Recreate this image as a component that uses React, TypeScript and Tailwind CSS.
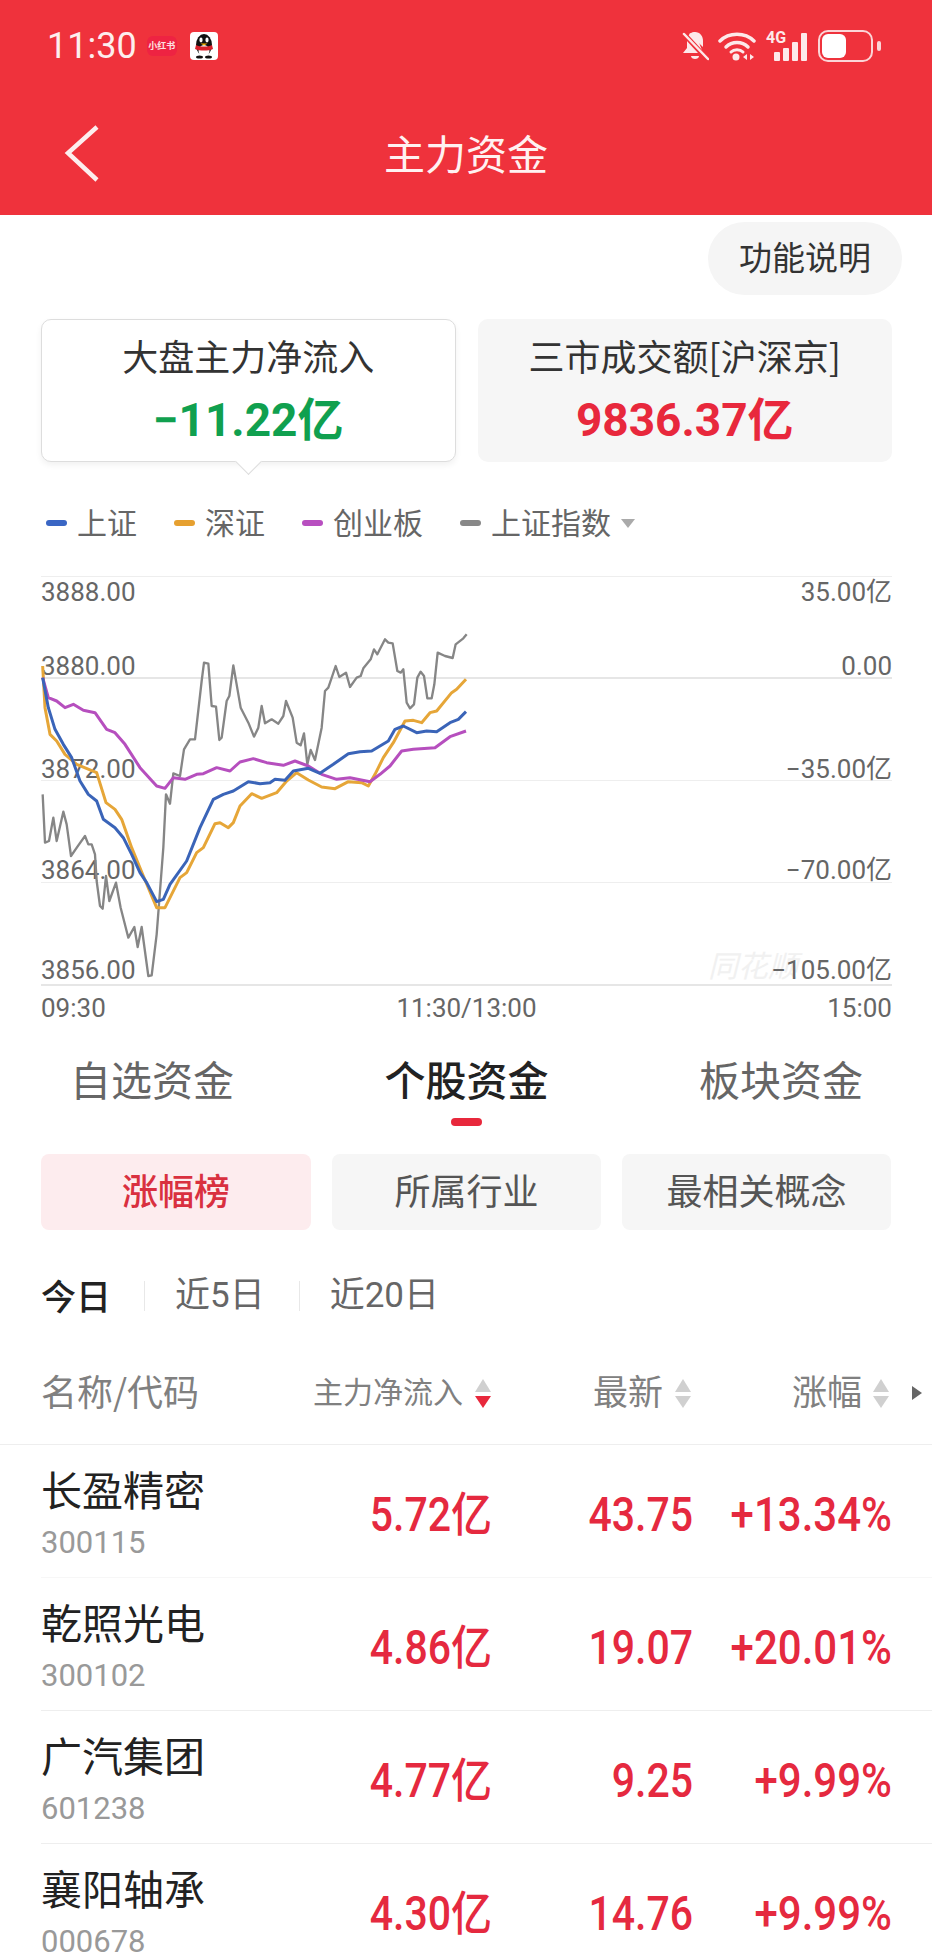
import React from 'react';

const grayLine = "128,700 135,845 147,840 160,770 170,840 190,752 200,790 213,885 235,853 255,825 265,850 275,850 285,880 290,960 300,1035 308,1043 318,945 328,1020 348,965 362,1040 385,1130 403,1098 413,1158 425,1098 445,1245 455,1243 470,1120 480,990 490,860 498,700 510,728 520,637 540,645 552,565 570,535 585,535 605,360 612,305 625,308 635,435 648,437 658,537 665,530 680,420 688,405 700,313 722,440 745,485 762,527 775,500 785,435 795,487 815,475 835,488 850,465 858,420 878,470 890,545 902,553 912,517 922,610 932,567 945,597 965,500 975,390 985,380 1007,315 1018,348 1038,335 1050,378 1070,350 1082,345 1090,322 1112,295 1122,265 1132,280 1155,235 1165,245 1178,247 1192,330 1202,335 1210,325 1220,425 1230,442 1242,430 1252,350 1262,332 1272,345 1282,412 1295,412 1303,370 1313,275 1335,285 1358,291 1367,250 1390,232 1400,220";
const orangeLine = "128,315 135,440 150,520 170,540 195,580 230,610 290,635 318,725 345,745 365,775 395,860 430,945 470,1040 495,1040 540,950 560,935 590,875 610,860 645,788 660,785 685,800 700,785 720,735 755,698 785,712 830,695 860,660 890,635 925,657 965,678 1005,683 1045,662 1085,665 1105,675 1125,640 1150,590 1180,545 1215,480 1240,478 1265,485 1290,455 1310,450 1355,395 1370,385 1398,355";
const purpleLine = "128,350 145,410 170,420 195,440 220,430 250,448 285,455 320,505 345,515 375,550 420,620 470,675 495,682 520,650 555,655 590,640 610,638 650,620 690,630 720,603 760,593 800,605 850,613 885,600 925,615 965,640 1010,655 1050,650 1110,662 1140,640 1170,615 1205,570 1240,565 1305,560 1350,527 1398,510";
const blueLine = "128,350 145,440 165,505 190,550 215,590 240,660 265,700 290,720 310,775 345,800 370,830 395,880 420,935 440,965 470,1022 490,1015 510,970 560,900 600,800 640,715 670,700 700,690 745,662 780,668 810,665 825,655 855,658 880,630 925,622 960,637 1000,610 1045,578 1080,572 1115,570 1165,540 1185,505 1210,495 1250,515 1280,510 1310,512 1350,485 1375,475 1398,452";

const stocks = [
  { name: '长盈精密', code: '300115', flow: '5.72亿', price: '43.75', pct: '+13.34%', line: 'border-[#f7f7f7]' },
  { name: '乾照光电', code: '300102', flow: '4.86亿', price: '19.07', pct: '+20.01%', line: 'border-[#eeeeee]' },
  { name: '广汽集团', code: '601238', flow: '4.77亿', price: '9.25', pct: '+9.99%', line: 'border-[#eeeeee]' },
  { name: '襄阳轴承', code: '000678', flow: '4.30亿', price: '14.76', pct: '+9.99%', line: 'border-[#eeeeee]' },
];

const cjk = "font-['Noto_Sans_CJK_SC',sans-serif]";
const num = "font-['Roboto','Noto_Sans_CJK_SC',sans-serif]";

function SortArrows({ active }: { active?: boolean }) {
  return (
    <svg width="16" height="29" viewBox="0 0 16 29" className="shrink-0">
      <path d="M8 0 L16 13 L0 13 Z" fill="#d0d0d0" />
      <path d="M0 17 L16 17 L8 29 Z" fill={active ? '#e8283c' : '#d0d0d0'} />
    </svg>
  );
}

function StatusIcons() {
  return (
    <div className="flex items-center">
      {/* muted bell */}
      <svg width="28" height="30" viewBox="0 0 28 30" fill="none">
        <path d="M14 1c-5 0-8 4-8 9v7l-4 5h20" fill="#fde9ea" />
        <path d="M14 1c5 0 8 4 8 9v6L8 3c2-1 4-2 6-2z" fill="#fde9ea" />
        <path d="M10 25h8c0 2-2 3-4 3s-4-1-4-3z" fill="#fde9ea" />
        <path d="M2 2 L26 28" stroke="#f0323c" strokeWidth="5" />
        <path d="M3 3 L27 28" stroke="#fde9ea" strokeWidth="2.5" strokeLinecap="round" />
      </svg>
      {/* wifi */}
      <svg width="38" height="30" viewBox="0 0 38 30" fill="none" className="ml-[9px]">
        <path d="M2 10C11 1 27 1 36 10" stroke="#fde9ea" strokeWidth="3.5" strokeLinecap="round" />
        <path d="M8 16C14 10 24 10 30 16" stroke="#fde9ea" strokeWidth="3.5" strokeLinecap="round" />
        <path d="M13 21C16 18 22 18 25 21" stroke="#fde9ea" strokeWidth="3" strokeLinecap="round" />
        <circle cx="18" cy="26" r="3.5" fill="#fde9ea" />
        <path d="M29 23 L25 26 L29 29 Z M32 23 L36 26 L32 29 Z" fill="#fde9ea" />
      </svg>
      {/* 4G + signal */}
      <div className="relative ml-[10px] h-[30px] w-[41px]">
        <span className="absolute left-0 top-[-1px] font-['Roboto',sans-serif] text-[16px] font-bold leading-[15px] text-[#fde9ea]">4G</span>
        <div className="absolute bottom-0 right-0 flex items-end gap-[3px]">
          <div className="h-[9px] w-[6px] rounded-[1px] bg-[#fde9ea]" />
          <div className="h-[13px] w-[6px] rounded-[1px] bg-[#fde9ea]" />
          <div className="h-[19px] w-[6px] rounded-[1px] bg-[#fde9ea]" />
          <div className="h-[28px] w-[6px] rounded-[1px] bg-[#fde9ea]" />
        </div>
      </div>
      {/* battery */}
      <div className="ml-[11px] flex h-[32px] w-[55px] items-center rounded-[10px] border-[2.5px] border-[#fbd5d7] p-[2px]">
        <div className="h-full w-[24px] rounded-[6px] bg-white" />
      </div>
      <div className="ml-[4px] h-[10px] w-[4px] rounded-full bg-[#fbd5d7]" />
    </div>
  );
}

function QQIcon() {
  return (
    <svg width="28" height="28" viewBox="0 0 28 28" className="ml-[13px]">
      <rect width="28" height="28" rx="4" fill="#fff" />
      <ellipse cx="14" cy="13" rx="8" ry="11" fill="#111" />
      <ellipse cx="14" cy="19" rx="5.5" ry="6" fill="#fff" />
      <path d="M6 13c4 2 12 2 16 0l1 4c-5 2-13 2-18 0z" fill="#d9202a" />
      <ellipse cx="11" cy="8" rx="1.6" ry="2.4" fill="#fff" />
      <ellipse cx="17" cy="8" rx="1.6" ry="2.4" fill="#fff" />
      <path d="M10.5 11.5h7l-3.5 2z" fill="#f5b400" />
      <ellipse cx="9.5" cy="25" rx="3.5" ry="1.6" fill="#111" />
      <ellipse cx="18.5" cy="25" rx="3.5" ry="1.6" fill="#111" />
    </svg>
  );
}

function LegendItem({ color, label }: { color: string; label: string }) {
  return (
    <div className="flex items-center gap-[10px]">
      <div className={`h-[6px] w-[21px] rounded-full ${color}`} />
      <span className="pb-[3px] text-[30px] leading-[41px] text-[#666666]">{label}</span>
    </div>
  );
}

export default function App() {
  return (
    <div className={`h-[1952px] w-[932px] overflow-hidden bg-white ${cjk}`}>
      {/* Red header */}
      <div className="h-[215px] bg-[#ef323c]">
        <div className="flex h-[92px] items-center justify-between pl-[47px] pr-[51px]">
          <div className="flex items-center">
            <span className="font-['Roboto',sans-serif] text-[36px] leading-[44px] text-[#fdeeee]">11:30</span>
            <div className="ml-[10px] flex h-[20px] w-[30px] items-center justify-center rounded-[6px] bg-[#ee2342]">
              <span className="whitespace-nowrap text-[9px] font-bold leading-[12px] text-[#fde0e0]">小红书</span>
            </div>
            <QQIcon />
          </div>
          <StatusIcons />
        </div>
        <div className="grid h-[123px] grid-cols-3 items-center">
          <div className="pl-[64px]">
            <svg width="36" height="58" viewBox="0 0 36 58" fill="none" className="block">
              <path d="M33 2 L4 28 L33 55" stroke="#fdeeee" strokeWidth="4.5" />
            </svg>
          </div>
          <div className="whitespace-nowrap pb-[4px] text-center text-[41px] leading-[50px] text-[#fff1f1]">主力资金</div>
        </div>
      </div>

      {/* Function note pill */}
      <div className="mr-[30px] mt-[7px] flex justify-end">
        <div className="flex h-[73px] w-[194px] items-center justify-center rounded-full bg-[#f5f5f5] pb-[6px] text-[33px] leading-[44px] text-[#333333]">功能说明</div>
      </div>

      {/* Market cards */}
      <div className="mt-[24px] grid grid-cols-2 gap-[22px] pl-[41px] pr-[40px]">
        <div className="relative h-[143px] rounded-[10px] border border-[#dddddd] bg-white pt-[13px] text-center shadow-[0_3px_6px_rgba(0,0,0,0.06)]">
          <div className="text-[36px] leading-[44px] text-[#333333]">大盘主力净流入</div>
          <div className={`mt-[19px] text-[46px] font-bold leading-[48px] text-[#10a04f] ${num}`}>−11.22亿</div>
          <div className="absolute bottom-[-10px] left-[197px] h-[19px] w-[19px] rotate-45 border-b border-r border-[#dddddd] bg-white" />
        </div>
        <div className="h-[143px] rounded-[10px] bg-[#f6f6f6] pt-[14px] text-center">
          <div className="text-[36px] leading-[44px] text-[#333333]">三市成交额[沪深京]</div>
          <div className={`mt-[19px] text-[46px] font-bold leading-[48px] text-[#e8283c] ${num}`}>9836.37亿</div>
        </div>
      </div>

      {/* Legend */}
      <div className="mt-[39px] flex h-[44px] items-center gap-[37px] pl-[46px]">
        <LegendItem color="bg-[#3a66c4]" label="上证" />
        <LegendItem color="bg-[#e6a030]" label="深证" />
        <LegendItem color="bg-[#b84fc0]" label="创业板" />
        <div className="flex items-center gap-[10px]">
          <LegendItem color="bg-[#888888]" label="上证指数" />
          <div className="h-0 w-0 border-x-[7px] border-t-[9px] border-x-transparent border-t-[#aaaaaa]" />
        </div>
      </div>

      {/* Chart */}
      <div className={`relative ml-[41px] mr-[40px] mt-[31px] border-t border-[#eeeeee] text-[26px] text-[#666666] ${num}`}>
        <span className="absolute left-[667px] top-[375px] whitespace-nowrap text-[30px] italic leading-[30px] text-[#f1f1f1]">同花顺</span>
        <div className="relative">
          <div className="flex h-[102px] flex-col justify-between border-b-2 border-[#e6e6e6]">
            <div className="flex justify-between pt-[1px] leading-[28px]"><span>3888.00</span><span>35.00亿</span></div>
            <div className="flex justify-between leading-[22px]"><span>3880.00</span><span>0.00</span></div>
          </div>
          <div className="flex h-[102px] items-end justify-between border-b border-[#eeeeee] leading-[22px]"><span>3872.00</span><span>−35.00亿</span></div>
          <div className="flex h-[102px] items-end justify-between border-b border-[#eeeeee] pb-[1px] leading-[22px]"><span>3864.00</span><span>−70.00亿</span></div>
          <div className="flex h-[103px] items-end justify-between border-b-2 border-[#e6e6e6] pb-[3px] leading-[22px]"><span>3856.00</span><span>−105.00亿</span></div>
        </div>

        <svg viewBox="123 48 2553 1230" className="absolute left-0 top-0 h-[410px] w-[851px]" fill="none">
          <polyline points={grayLine} stroke="#868686" strokeWidth="7" strokeLinejoin="round" />
          <polyline points={orangeLine} stroke="#e6a638" strokeWidth="9" strokeLinejoin="round" />
          <polyline points={purpleLine} stroke="#b64fbe" strokeWidth="9" strokeLinejoin="round" />
          <polyline points={blueLine} stroke="#3a64b8" strokeWidth="9" strokeLinejoin="round" />
        </svg>
      </div>
      <div className={`ml-[41px] mr-[40px] mt-[7px] flex justify-between text-[26px] leading-[30px] text-[#666666] ${num}`}>
        <span>09:30</span>
        <span>11:30/13:00</span>
        <span>15:00</span>
      </div>

      {/* Funds tabs */}
      <div className="mt-[31px] flex justify-between pl-[70px] pr-[69px] text-[41px] leading-[48px] text-[#666666]">
        <span>自选资金</span>
        <div className="flex flex-col items-center">
          <span className="font-medium text-[#222222]">个股资金</span>
          <div className="mt-[16px] h-[8px] w-[31px] rounded-full bg-[#e8283c]" />
        </div>
        <span>板块资金</span>
      </div>

      {/* Sub filters */}
      <div className="mt-[28px] grid grid-cols-[270px_269px_269px] gap-[21px] pl-[41px] text-[36px]">
        <div className="flex h-[76px] items-center justify-center rounded-[8px] bg-[#fdecee] pb-[6px] font-medium text-[#d9303f]">涨幅榜</div>
        <div className="flex h-[76px] items-center justify-center rounded-[8px] bg-[#f6f6f6] pb-[6px] text-[#555555]">所属行业</div>
        <div className="flex h-[76px] items-center justify-center rounded-[8px] bg-[#f6f6f6] pb-[6px] text-[#555555]">最相关概念</div>
      </div>

      {/* Period */}
      <div className="mt-[44px] flex h-[44px] items-center pl-[41px] text-[35px] leading-[44px] text-[#666666]">
        <span className="mb-[3px] font-medium text-[#222222]">今日</span>
        <div className="ml-[33px] h-[30px] w-px bg-[#e8e8e8]" />
        <span className={`ml-[30px] ${num}`}>近5日</span>
        <div className="ml-[34px] h-[30px] w-px bg-[#e8e8e8]" />
        <span className={`ml-[30px] ${num}`}>近20日</span>
      </div>

      {/* Table head */}
      <div className="mt-[50px] flex h-[77px] items-start border-b border-[#eeeeee] pl-[41px] text-[35px] leading-[44px] text-[#808080]">
        <span className="w-[272px] text-[36px]">名称/代码</span>
        <span className="w-[150px] text-[30px]">主力净流入</span>
        <div className="ml-[12px] pt-[11px]"><SortArrows active /></div>
        <span className="ml-[102px] w-[70px]">最新</span>
        <div className="ml-[12px] pt-[11px]"><SortArrows /></div>
        <span className="ml-[101px] w-[70px]">涨幅</span>
        <div className="ml-[11px] pt-[11px]"><SortArrows /></div>
        <div className="ml-[23px] mt-[18px] h-0 w-0 border-y-[7px] border-l-[10px] border-y-transparent border-l-[#666666]" />
      </div>

      {/* Rows */}
      <div>
        {stocks.map((s) => (
          <div key={s.code} className={`ml-[41px] flex h-[133px] items-start border-b ${s.line}`}>
            <div className="w-[302px] pt-[19px]">
              <div className="text-[41px] leading-[48px] text-[#222222]">{s.name}</div>
              <div className="mt-[13px] font-['Roboto',sans-serif] text-[31px] leading-[36px] text-[#999999]">{s.code}</div>
            </div>
            <div className={`mt-[46px] w-[149px] scale-y-[1.15] text-right text-[41px] font-medium leading-[48px] text-[#e5293f] ${num}`}>{s.flow}</div>
            <div className={`mt-[46px] w-[201px] scale-y-[1.15] text-right text-[41px] font-medium leading-[48px] text-[#e5293f] ${num}`}>{s.price}</div>
            <div className={`mt-[46px] w-[199px] scale-y-[1.15] whitespace-nowrap text-right text-[42px] font-medium leading-[48px] text-[#e5293f] ${num}`}>{s.pct}</div>
          </div>
        ))}
      </div>
    </div>
  );
}
